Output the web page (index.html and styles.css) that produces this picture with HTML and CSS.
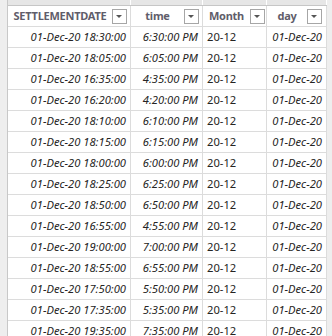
FILE: index.html
```html
<!DOCTYPE html>
<html>
<head>
<meta charset="utf-8">
<link rel="stylesheet" href="styles.css">
</head>
<body>
<div class="table">
  <div class="strip"><span></span><span></span><span></span><span></span></div>
  <div class="row head">
    <div class="cell h c1"><span class="ht">SETTLEMENTDATE</span><span class="dd"></span></div>
    <div class="cell h c2"><span class="ht">time</span><span class="dd"></span></div>
    <div class="cell h c3"><span class="ht">Month</span><span class="dd dd-tight"></span></div>
    <div class="cell h c4"><span class="ht">day</span><span class="dd dd-wide"></span></div>
  </div>
  <div id="body"></div>
</div>
<script src="script.js"></script>
</body>
</html>
```
FILE: styles.css
```css
html, body { margin: 0; padding: 0; }
body {
  background: #eeeeee;
  width: 332px;
  height: 336px;
  overflow: hidden;
  font-family: "Segoe UI", "Noto Sans", "Liberation Sans", sans-serif;
}
.table {
  margin-left: 7px;
  width: 320px;
  background: #ffffff;
  border-left: 1px solid #c8c8c8;
  box-sizing: border-box;
}
.strip {
  display: grid;
  grid-template-columns: 123px 72px 64px 60px;
  height: 5px;
  border-bottom: 1px solid #c6c6c6;
  background: #e6e6e6;
}
.strip span { border-right: 1px solid #ffffff; }
.row {
  display: grid;
  grid-template-columns: 123px 72px 64px 60px;
  height: 21px;
}
.cell {
  border-right: 1px solid #dcdcdc;
  border-bottom: 1px solid #dcdcdc;
  box-sizing: border-box;
  font-size: 11.2px;
  line-height: 20px;
  color: #252423;
  white-space: nowrap;
  overflow: hidden;
  padding: 0 4px;
}
.h {
  display: flex;
  align-items: center;
  padding: 0;
}
.ht {
  flex: 1;
  text-align: center;
  font-weight: bold;
  font-size: 11px;
  letter-spacing: -0.25px;
  color: #5f5d6a;
}
.dd {
  position: relative;
  flex: none;
  width: 15px;
  height: 15px;
  box-sizing: border-box;
  border: 1px solid #a6a6a6;
  margin-right: 3px;
  background: #fff;
}
.dd::after {
  content: "";
  position: absolute;
  left: 3px;
  top: 5px;
  border-left: 3.5px solid transparent;
  border-right: 3.5px solid transparent;
  border-top: 3px solid #555;
}
.dd-tight { margin-right: 1px; }
.dd-wide { margin-right: 4px; }
.r { text-align: right; }
.i { font-style: italic; }
```
FILE: script.js
```js
var times = ["18:30","18:05","16:35","16:20","18:10","18:15","18:00","18:25","18:50","16:55","19:00","18:55","17:50","17:35","19:35"];
var html = "";
times.forEach(function (t) {
  var hh = parseInt(t.split(":")[0], 10) - 12;
  var mm = t.split(":")[1];
  html += '<div class="row">' +
    '<div class="cell r i">01-Dec-20 ' + t + ':00</div>' +
    '<div class="cell r i">' + hh + ':' + mm + ':00 PM</div>' +
    '<div class="cell">20-12</div>' +
    '<div class="cell r i">01-Dec-20</div>' +
    '</div>';
});
document.getElementById("body").innerHTML = html;
```
